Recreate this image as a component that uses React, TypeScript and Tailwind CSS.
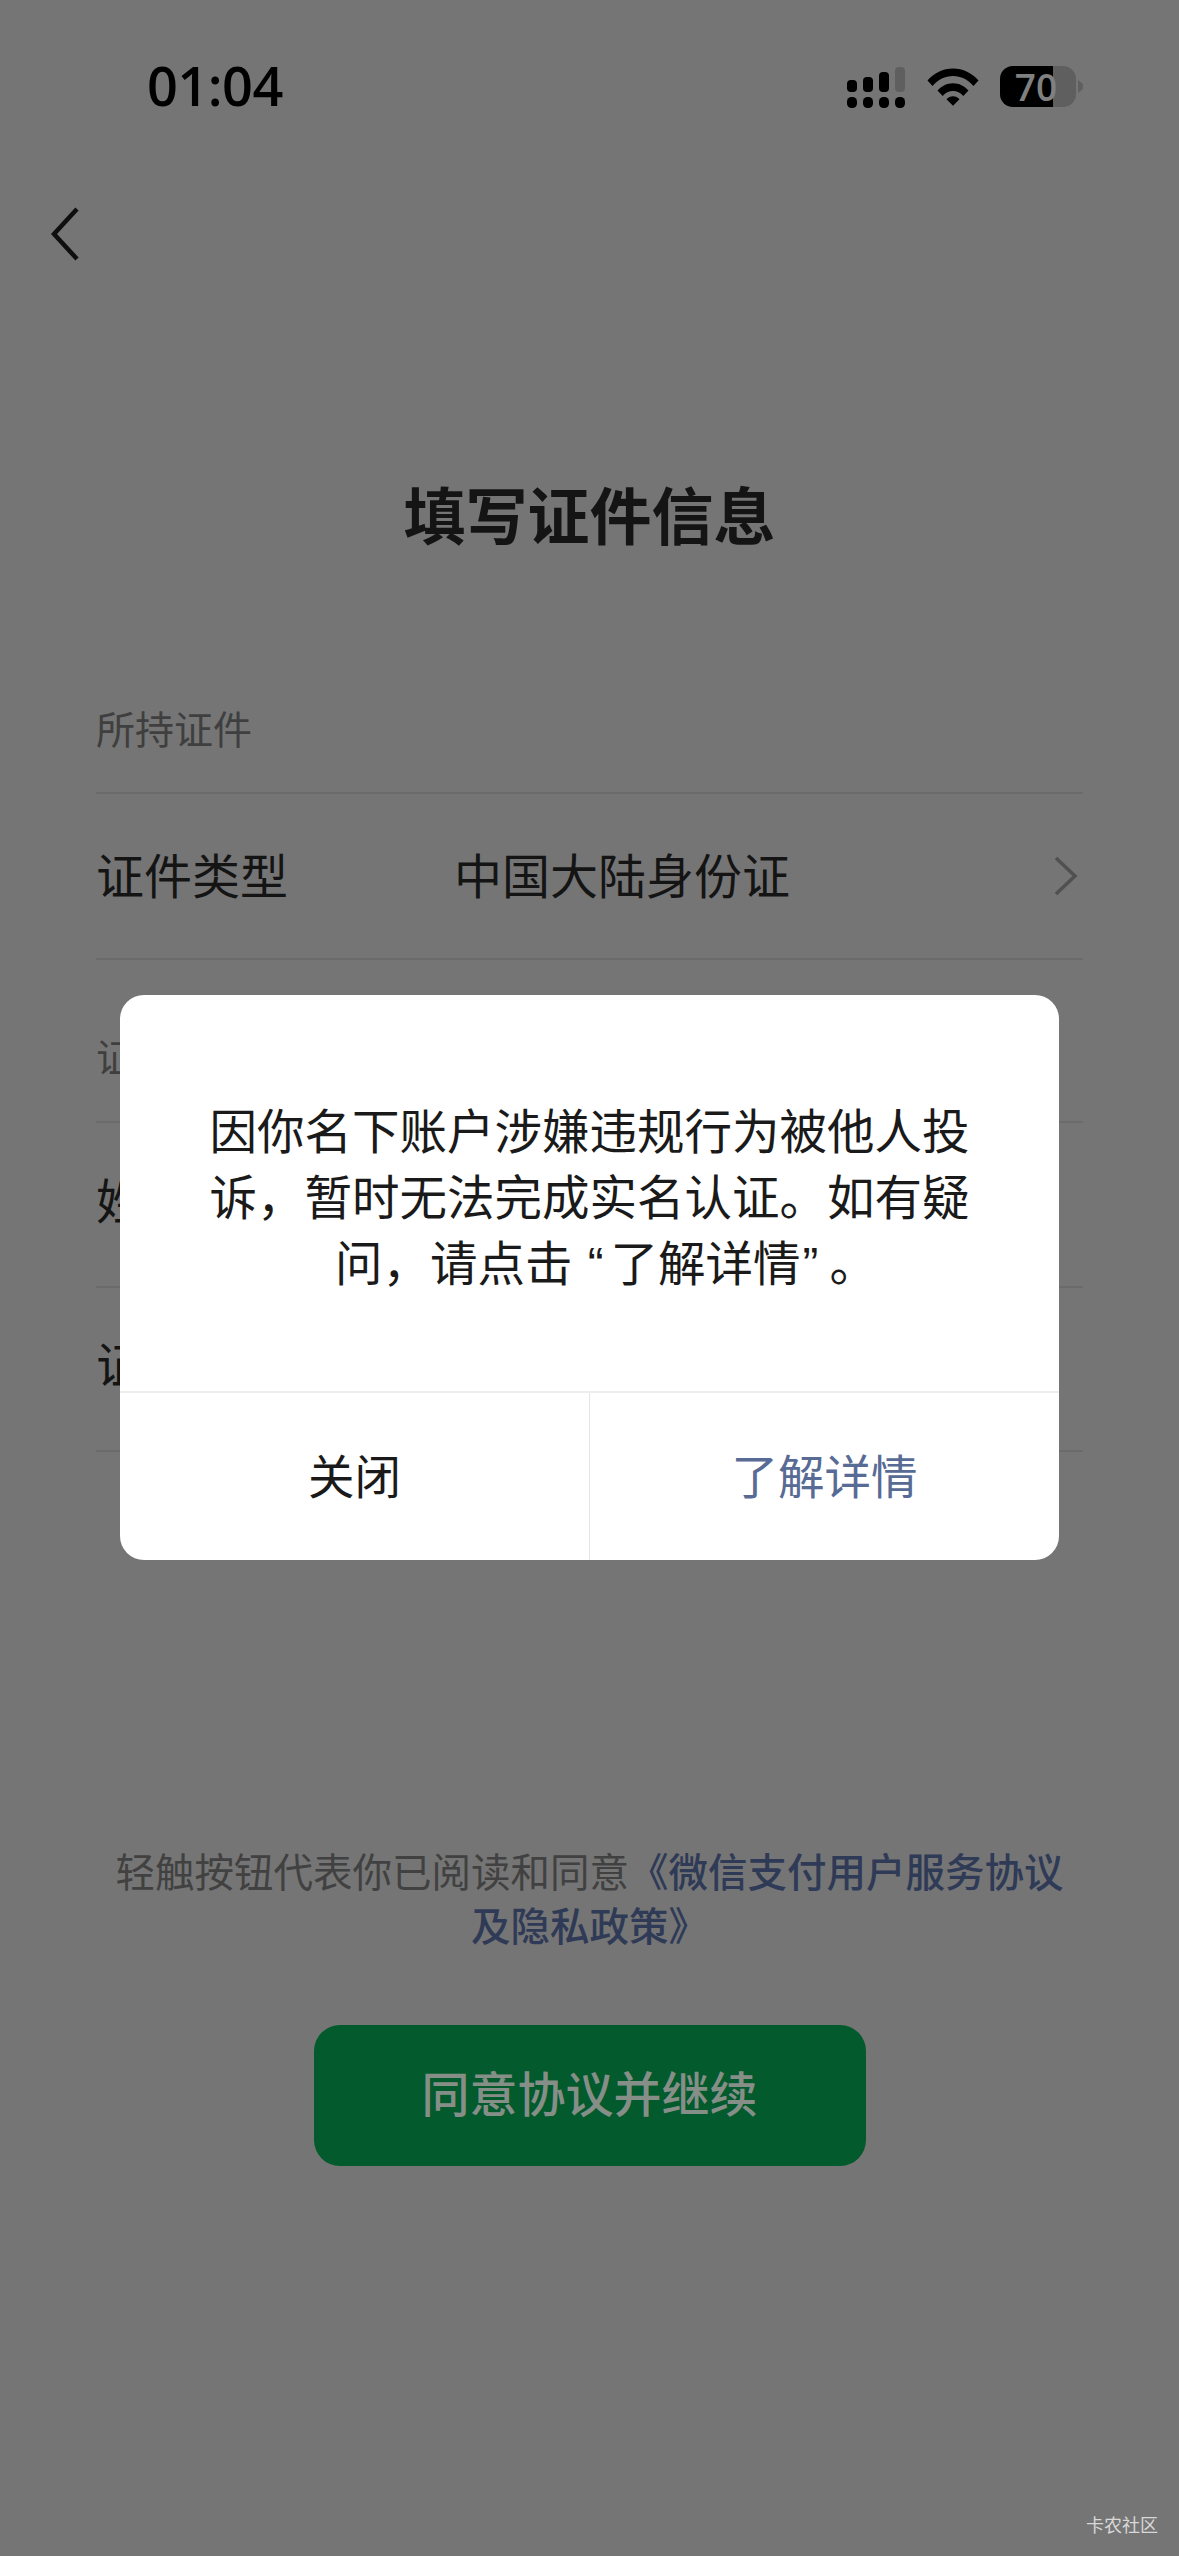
const rowLabel = "text-[48px] leading-[64px] text-[#141414]";

function SignalIcon() {
  return (
    <svg width="60" height="42" viewBox="0 0 60 42" className="block">
      <rect x="1" y="14" width="10" height="12" rx="4" fill="#000" />
      <rect x="17" y="11" width="10" height="15" rx="4" fill="#000" />
      <rect x="33" y="6" width="10" height="20" rx="4" fill="#000" />
      <rect x="49" y="1" width="10" height="25" rx="4" fill="#5f5f5f" />
      <rect x="1" y="31" width="10" height="11" rx="4.5" fill="#000" />
      <rect x="17" y="31" width="10" height="11" rx="4.5" fill="#000" />
      <rect x="33" y="31" width="10" height="11" rx="4.5" fill="#000" />
      <rect x="49" y="31" width="10" height="11" rx="4.5" fill="#000" />
    </svg>
  );
}

function WifiIcon() {
  return (
    <svg width="52" height="38" viewBox="0 0 52 38" className="block">
      <path d="M0.5 12.5C7 5 16 0.5 26 0.5S45 5 51.5 12.5L46.5 18C41 11.5 34 8 26 8S11 11.500 5.500 18Z" fill="#000" />
      <path d="M10.500 22.500C14.500 18 20 15.200 26 15.200S37.500 18 41.500 22.500L36.300 28C33.500 24.800 30 23 26 23S18.500 24.800 15.700 28Z" fill="#000" />
      <path d="M19.500 31.200C21.200 29.300 23.500 28.200 26 28.200S30.800 29.300 32.500 31.200L26 37.800Z" fill="#000" />
    </svg>
  );
}

function BatteryIcon() {
  return (
    <div className="flex items-center gap-[2px]">
      <div className="relative w-[76px] h-[41px] rounded-[13px] bg-[#5f5f5f]">
        <div className="w-[53px] h-full rounded-l-[13px] bg-black" />
        <span className="absolute inset-0 flex items-center justify-center pr-[4px] font-['Open_Sans',sans-serif] font-semibold text-[37px] leading-none text-[#808080]">
          70
        </span>
      </div>
      <svg width="5" height="13" viewBox="0 0 5 13" className="block">
        <path d="M0 0L5 4V9L0 13Z" fill="#5f5f5f" />
      </svg>
    </div>
  );
}

function Row({ label, value, box }: { label: string; value?: string; box: string }) {
  return (
    <div className={`flex items-center border-b-2 border-[#6b6b6b] ${box}`}>
      <span className={`w-[358px] ${rowLabel}`}>{label}</span>
      {value && <span className={`flex-1 ${rowLabel}`}>{value}</span>}
      {value && (
        <svg width="24" height="40" viewBox="0 0 24 40" className="block mr-[5px] -mt-[4px]" fill="none">
          <path d="M2 2L21 20L2 38" stroke="#505050" strokeWidth="3.500" />
        </svg>
      )}
    </div>
  );
}

function SectionLabel({ text, box }: { text: string; box: string }) {
  return (
    <div className={`${box} border-b-2 border-[#6b6b6b] text-[39px] leading-[56px] text-[#3f3f3f]`}>
      {text}
    </div>
  );
}

export default function App() {
  return (
    <div className="relative w-[1179px] h-[2556px] overflow-hidden bg-[#757575] font-['Liberation_Sans','Noto_Sans_CJK_SC',sans-serif]">
      <div className="flex items-start justify-between h-[130px] pl-[147px] pr-[96px] pt-[66px]">
        <span className="-mt-[3px] font-['Open_Sans',sans-serif] font-semibold text-[54px] leading-[44px] text-black tracking-[-0.5px]">
          01:04
        </span>
        <div className="flex items-start gap-[21px]">
          <SignalIcon />
          <div className="pt-[2px]"><WifiIcon /></div>
          <BatteryIcon />
        </div>
      </div>

      <div className="pl-[50px] pt-[77px]">
        <svg width="30" height="54" viewBox="0 0 30 54" className="block" fill="none">
          <path d="M27 2L4 27L27 52" stroke="#0f0f0f" strokeWidth="4.500" />
        </svg>
      </div>

      <h1 className="mt-[218px] text-center text-[62px] leading-[80px] font-bold text-[#141414]">填写证件信息</h1>

      <div className="mx-[96px]">
        <SectionLabel text="所持证件" box="pt-[144px] pb-[33px]" />
        <Row label="证件类型" value="中国大陆身份证" box="h-[166px] pt-[3px]" />
        <SectionLabel text="证件信息" box="pt-[71px] pb-[34px]" />
        <Row label="姓名" box="h-[165px] pb-[3px]" />
        <Row label="证件号码" box="h-[164px] pb-[4px]" />
      </div>

      <p className="mt-[394px] px-[109px] text-center text-[39.500px] leading-[54px] text-[#414141]">
        轻触按钮代表你已阅读和同意<span className="font-medium text-[#2f3a56]">《微信支付用户服务协议及隐私政策》</span>
      </p>

      <div className="mt-[71px] mx-auto flex items-center justify-center w-[552px] h-[141px] rounded-[26px] bg-[#025a2d] text-[48px] font-medium text-[#868e88]">
        同意协议并继续
      </div>

      <div className="absolute left-[120px] top-[995px] w-[939px] h-[565px] flex flex-col rounded-[24px] bg-white overflow-hidden">
        <p className="h-[396px] pt-[105px] text-center text-[47.500px] leading-[66px] text-[#1a1a1a]">
          <span className="block">因你名下账户涉嫌违规行为被他人投</span>
          <span className="block">诉，暂时无法完成实名认证。如有疑</span>
          <span className="block pl-[33px]">
            问，请点击 <span className="ml-[2px] mr-[7px]">“</span>了解详情<span className="ml-[2px] mr-[11px]">”</span>。
          </span>
        </p>
        <div className="flex flex-1 border-t-2 border-[#ededed]">
          <div className="flex-1 flex items-center justify-center pt-[5px] border-r border-[#e5e5e5] text-[46.500px] text-[#1a1a1a]">关闭</div>
          <div className="flex-1 flex items-center justify-center pt-[5px] text-[46.500px] text-[#576b95]">了解详情</div>
        </div>
      </div>

      <span className="absolute right-[21px] bottom-[19px] text-[18px] leading-[22px] text-[#d8d8d8]">卡农社区</span>
    </div>
  );
}
